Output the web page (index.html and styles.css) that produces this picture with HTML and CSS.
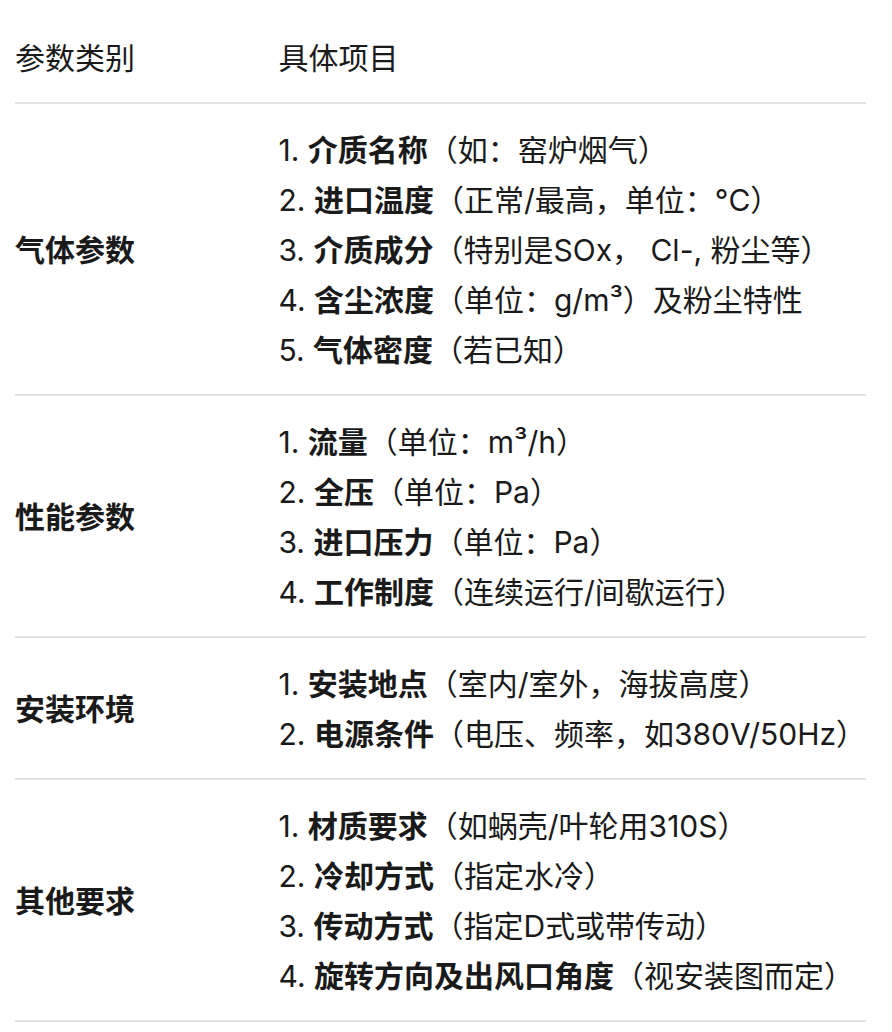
FILE: index.html
```html
<!DOCTYPE html>
<html lang="zh-CN">
<head>
<meta charset="utf-8">
<link rel="stylesheet" href="styles.css">
</head>
<body>
<table class="spec">
  <thead>
    <tr><th class="cat">参数类别</th><th class="items">具体项目</th></tr>
  </thead>
  <tbody>
    <tr>
      <td class="cat">气体参数</td>
      <td class="items">
        <div class="item">1. <b>介质名称</b>（如：窑炉烟气）</div>
        <div class="item">2. <b>进口温度</b>（正常/最高，单位：°C）</div>
        <div class="item">3. <b>介质成分</b>（特别是SOx， Cl-, 粉尘等）</div>
        <div class="item">4. <b>含尘浓度</b>（单位：g/m³）及粉尘特性</div>
        <div class="item">5. <b>气体密度</b>（若已知）</div>
      </td>
    </tr>
    <tr>
      <td class="cat">性能参数</td>
      <td class="items">
        <div class="item">1. <b>流量</b>（单位：m³/h）</div>
        <div class="item">2. <b>全压</b>（单位：Pa）</div>
        <div class="item">3. <b>进口压力</b>（单位：Pa）</div>
        <div class="item">4. <b>工作制度</b>（连续运行/间歇运行）</div>
      </td>
    </tr>
    <tr>
      <td class="cat">安装环境</td>
      <td class="items">
        <div class="item">1. <b>安装地点</b>（室内/室外，海拔高度）</div>
        <div class="item">2. <b>电源条件</b>（电压、频率，如380V/50Hz）</div>
      </td>
    </tr>
    <tr>
      <td class="cat">其他要求</td>
      <td class="items">
        <div class="item">1. <b>材质要求</b>（如蜗壳/叶轮用310S）</div>
        <div class="item">2. <b>冷却方式</b>（指定水冷）</div>
        <div class="item">3. <b>传动方式</b>（指定D式或带传动）</div>
        <div class="item">4. <b>旋转方向及出风口角度</b>（视安装图而定）</div>
      </td>
    </tr>
  </tbody>
</table>
</body>
</html>
```
FILE: styles.css
```css
html, body {
  margin: 0;
  padding: 0;
  background: #ffffff;
}
body {
  font-family: Inter, "Noto Sans CJK SC", sans-serif;
  font-size: 30px;
  line-height: 50px;
  color: #1a1a1a;
  padding: 33px 0 0 15px;
}
.spec {
  width: 851px;
  border-collapse: collapse;
}
.spec th {
  font-weight: normal;
  text-align: left;
  padding: 0 0 19px 0;
  border-bottom: 2px solid #e3e3e3;
}
.spec td {
  padding: 21px 0 19px 0;
  border-bottom: 2px solid #e3e3e3;
  vertical-align: middle;
}
.spec .cat {
  width: 264px;
}
.spec td.cat {
  font-weight: bold;
}
.item {
  white-space: nowrap;
}
.item b {
  font-weight: bold;
}
```
